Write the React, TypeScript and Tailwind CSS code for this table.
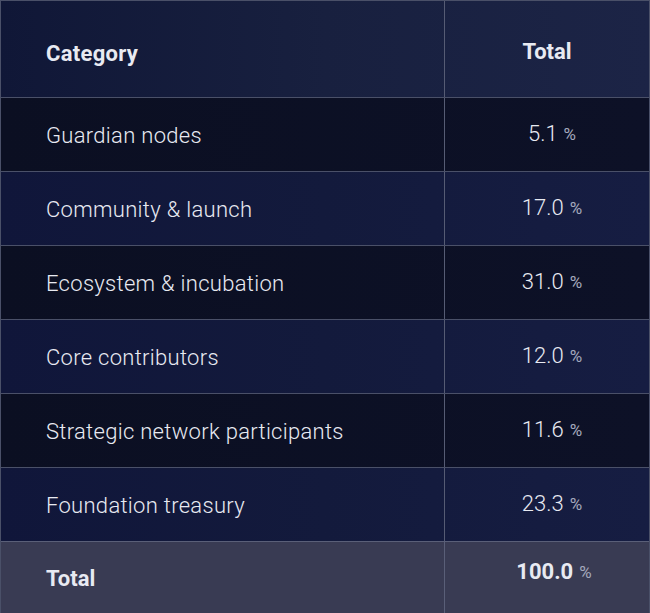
import React from "react";

const rows = [
  { name: "Guardian nodes", value: "5.1", dark: true },
  { name: "Community & launch", value: "17.0", dark: false },
  { name: "Ecosystem & incubation", value: "31.0", dark: true },
  { name: "Core contributors", value: "12.0", dark: false },
  { name: "Strategic network participants", value: "11.6", dark: true },
  { name: "Foundation treasury", value: "23.3", dark: false },
];

export default function App() {
  return (
    <div
      className="w-[650px] h-[613px] bg-[#0b0f22] border border-b-0 border-[#4a5068] overflow-hidden text-[#e8eaf2]"
      style={{ fontFamily: "Roboto, 'Liberation Sans', sans-serif" }}
    >
      <div className="grid grid-cols-[443px_1fr] h-[96px] bg-gradient-to-r from-[#101737] via-[#18203f] to-[#1c2446]">
        <div className="flex items-center pl-[45px] pt-[8px] text-[22px] font-bold tracking-[0.3px]">Category</div>
        <div className="flex items-center justify-center border-l border-[#565c74] pt-[4px] text-[22px] font-bold">Total</div>
      </div>
      {rows.map((r) => (
        <div
          key={r.name}
          className={
            r.dark
              ? "grid grid-cols-[443px_1fr] h-[74px] border-t border-[#4a5068] bg-gradient-to-r from-[#0b0f22] to-[#0d1127]"
              : "grid grid-cols-[443px_1fr] h-[74px] border-t border-[#4a5068] bg-gradient-to-r from-[#10163a] via-[#131a3c] to-[#161d42]"
          }
        >
          <div className="flex items-center pl-[45px] pt-[2px] text-[22px] font-light tracking-[0.3px]">{r.name}</div>
          <div className="flex items-baseline justify-center border-l border-[#565c74] pl-[10px] pt-[22px]">
            <span className="text-[22px] font-light leading-[28px]">{r.value}</span>
            <span className="ml-[6px] text-[17px] font-normal text-[#a4a8bc] relative top-[-1px]">%</span>
          </div>
        </div>
      ))}
      <div className="grid grid-cols-[443px_1fr] h-[72px] border-t border-[#5a5f78] bg-[#393b53]">
        <div className="flex items-center pl-[45px] pt-[2px] text-[22px] font-bold">Total</div>
        <div className="flex items-baseline justify-center border-l border-[#5a5f78] pl-[14px] pt-[16px]">
          <span className="text-[22px] font-bold leading-[28px]">100.0</span>
          <span className="ml-[6px] text-[17px] font-normal text-[#a4a8bc] relative top-[-1px]">%</span>
        </div>
      </div>
    </div>
  );
}
